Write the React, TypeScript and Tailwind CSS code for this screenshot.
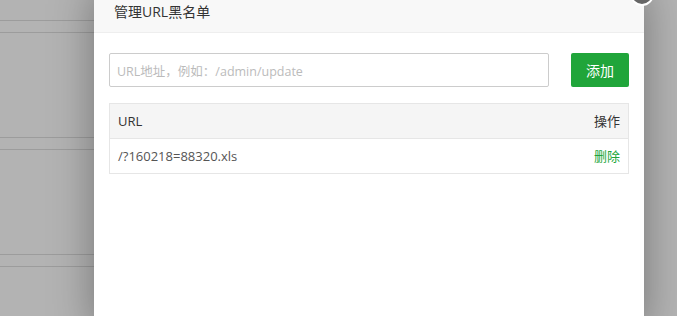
import React from 'react';

const font = { fontFamily: '"Open Sans", "Noto Sans CJK SC", sans-serif' };

const BgRow: React.FC = () => (
    <div className="h-[117px] flex flex-col">
        <div className="h-[20px]" />
        <div className="h-[13px] border-t border-b border-[#9c9c9c]" />
    </div>
);

export default function App() {
    return (
        <div className="relative w-[677px] h-[316px] overflow-hidden bg-[#b3b3b3]" style={font}>
            {/* page behind the overlay */}
            <div className="flex flex-col w-[94px]">
                <BgRow />
                <BgRow />
                <BgRow />
            </div>

            {/* modal */}
            <div className="absolute left-[94px] top-[-10px] w-[550px] h-[340px] bg-white shadow-[0_0_40px_rgba(0,0,0,0.35)] flex flex-col">
                <div className="h-[43px] bg-[#f8f8f8] border-b border-[#eeeeee] flex items-center pl-5 pt-[1px] text-[14px] text-[#333]">
                    管理URL黑名单
                </div>
                <div className="px-[15px] pt-5 flex flex-col">
                    <div className="flex items-center gap-[22px]">
                        <input
                            type="text"
                            placeholder="URL地址，例如：/admin/update"
                            className="w-[440px] h-[34px] border border-[#cccccc] rounded-[2px] px-[7px] pt-[2px] text-[12.5px] text-[#555] placeholder:text-[#bbbbbb] outline-none"
                        />
                        <button className="w-[58px] h-[34px] bg-[#20a53a] text-white text-[14px] rounded-[2px] flex items-center justify-center pt-[1px]">
                            添加
                        </button>
                    </div>
                    <div className="mt-4 w-[520px] border border-[#e6e6e6] text-[13px]">
                        <div className="h-[35px] bg-[#f5f5f5] border-b border-[#e6e6e6] flex items-center justify-between px-2 pt-[2px] text-[#333]">
                            <span>URL</span>
                            <span>操作</span>
                        </div>
                        <div className="h-[34px] flex items-center justify-between px-2 pt-[2px] text-[#555]">
                            <span>/?160218=88320.xls</span>
                            <span className="text-[#20a53a]">删除</span>
                        </div>
                    </div>
                </div>

                {/* close button */}
                <div className="absolute right-[-10px] top-[-8px] w-[24px] h-[24px] rounded-full bg-[#666] border-2 border-white" />
            </div>
        </div>
    );
}
